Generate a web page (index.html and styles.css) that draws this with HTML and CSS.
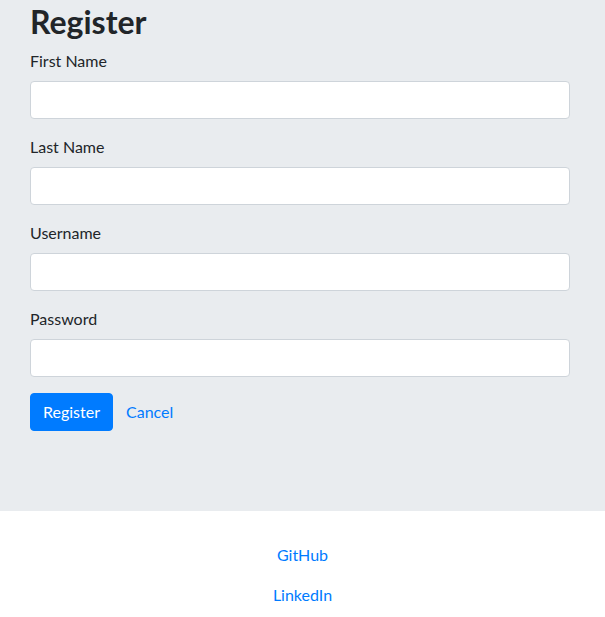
FILE: index.html
```html
<!DOCTYPE html>
<html>
<head>
<meta charset="utf-8">
<link rel="stylesheet" href="styles.css">
</head>
<body>
<main class="jumbotron">
  <h1 class="title">Register</h1>
  <form class="form">
    <div class="group">
      <label class="label">First Name</label>
      <input class="input" type="text">
    </div>
    <div class="group">
      <label class="label">Last Name</label>
      <input class="input" type="text">
    </div>
    <div class="group">
      <label class="label">Username</label>
      <input class="input" type="text">
    </div>
    <div class="group">
      <label class="label">Password</label>
      <input class="input" type="password">
    </div>
    <div class="actions">
      <button class="btn" type="button">Register</button>
      <a class="link" href="#">Cancel</a>
    </div>
  </form>
</main>
<footer class="footer">
  <a class="link" href="#">GitHub</a>
  <a class="link" href="#">LinkedIn</a>
</footer>
</body>
</html>
```
FILE: styles.css
```css
* { box-sizing: border-box; }
html, body { margin: 0; padding: 0; }
body {
  font-family: Lato, "Open Sans", sans-serif;
  font-size: 16px;
  line-height: 1.5;
  color: #212529;
  background: #fff;
}
.jumbotron {
  background: #e9ecef;
  padding: 3px 35px 80px 30px;
}
.title {
  margin: 0 0 8px 0;
  font-size: 32px;
  font-weight: 700;
  line-height: 1.2;
}
.form { margin: 0; }
.group { margin-bottom: 16px; display: flex; flex-direction: column; }
.label { margin-bottom: 8px; display: block; }
.input {
  display: block;
  width: 100%;
  height: 38px;
  padding: 6px 12px;
  font: inherit;
  border: 1px solid #ced4da;
  border-radius: 4px;
  background: #fff;
}
.actions { display: flex; align-items: center; gap: 13px; }
.btn {
  font: inherit;
  color: #fff;
  background: #007bff;
  border: 1px solid #007bff;
  border-radius: 4px;
  padding: 6px 12px;
  height: 38px;
  line-height: 24px;
}
.link { color: #007bff; text-decoration: none; }
.footer {
  display: flex;
  flex-direction: column;
  align-items: center;
  gap: 16px;
  padding: 32px 0 0 0;
}
```
